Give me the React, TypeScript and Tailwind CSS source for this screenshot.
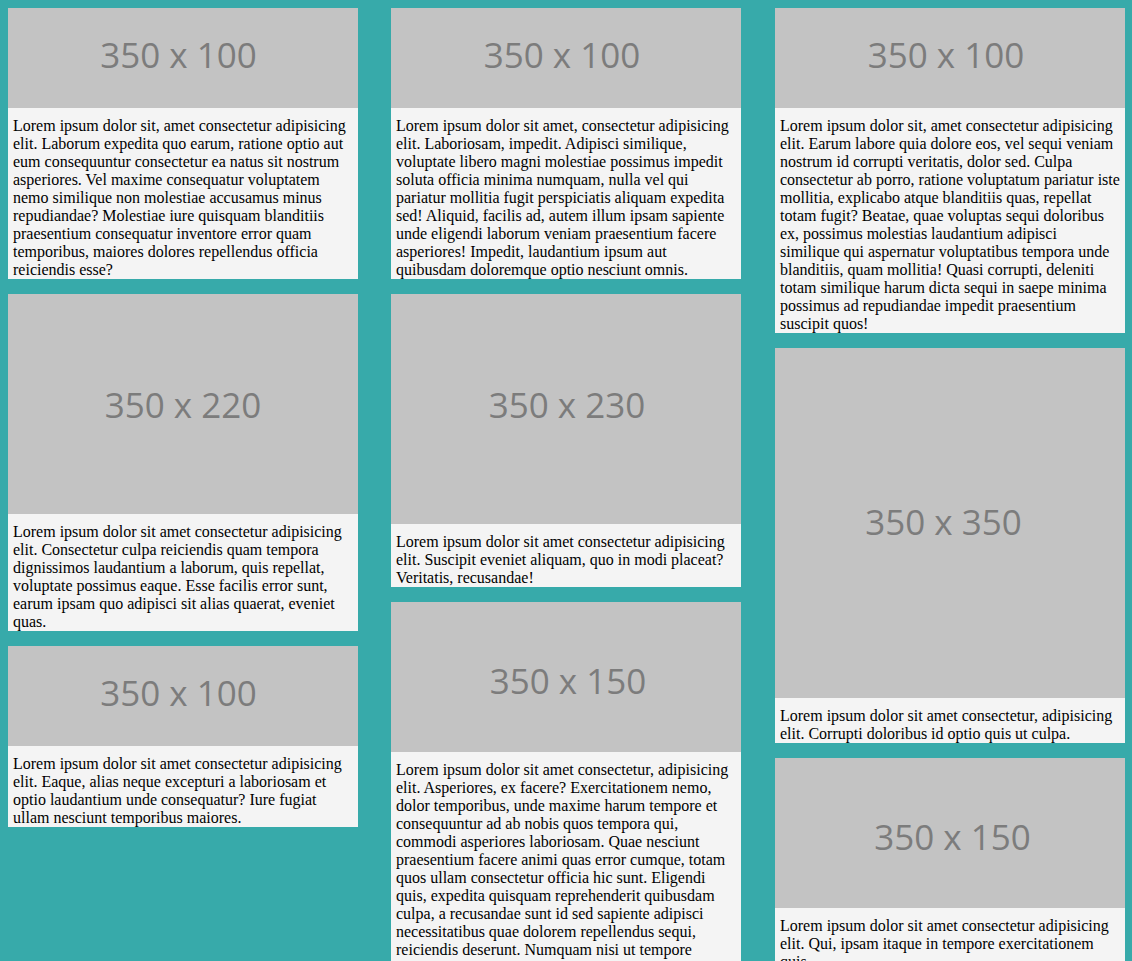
type Card = {
  w: number;
  h: number;
  imgH: string;
  nudge: string;
  text: string;
};

const columns: Card[][] = [
  [
    {
      w: 350,
      h: 100,
      imgH: "h-[100px]",
      nudge: "pr-[9px] pb-[8px]",
      text: "Lorem ipsum dolor sit, amet consectetur adipisicing elit. Laborum expedita quo earum, ratione optio aut eum consequuntur consectetur ea natus sit nostrum asperiores. Vel maxime consequatur voluptatem nemo similique non molestiae accusamus minus repudiandae? Molestiae iure quisquam blanditiis praesentium consequatur inventore error quam temporibus, maiores dolores repellendus officia reiciendis esse?",
    },
    {
      w: 350,
      h: 220,
      imgH: "h-[220px]",
      nudge: "",
      text: "Lorem ipsum dolor sit amet consectetur adipisicing elit. Consectetur culpa reiciendis quam tempora dignissimos laudantium a laborum, quis repellat, voluptate possimus eaque. Esse facilis error sunt, earum ipsam quo adipisci sit alias quaerat, eveniet quas.",
    },
    {
      w: 350,
      h: 100,
      imgH: "h-[100px]",
      nudge: "pr-[9px] pb-[8px]",
      text: "Lorem ipsum dolor sit amet consectetur adipisicing elit. Eaque, alias neque excepturi a laboriosam et optio laudantium unde consequatur? Iure fugiat ullam nesciunt temporibus maiores.",
    },
  ],
  [
    {
      w: 350,
      h: 100,
      imgH: "h-[100px]",
      nudge: "pr-[8px] pb-[8px]",
      text: "Lorem ipsum dolor sit amet, consectetur adipisicing elit. Laboriosam, impedit. Adipisci similique, voluptate libero magni molestiae possimus impedit soluta officia minima numquam, nulla vel qui pariatur mollitia fugit perspiciatis aliquam expedita sed! Aliquid, facilis ad, autem illum ipsam sapiente unde eligendi laborum veniam praesentium facere asperiores! Impedit, laudantium ipsum aut quibusdam doloremque optio nesciunt omnis.",
    },
    {
      w: 350,
      h: 230,
      imgH: "h-[230px]",
      nudge: "pl-[2px] pb-[10px]",
      text: "Lorem ipsum dolor sit amet consectetur adipisicing elit. Suscipit eveniet aliquam, quo in modi placeat? Veritatis, recusandae!",
    },
    {
      w: 350,
      h: 150,
      imgH: "h-[150px]",
      nudge: "pl-[4px] pt-[6px]",
      text: "Lorem ipsum dolor sit amet consectetur, adipisicing elit. Asperiores, ex facere? Exercitationem nemo, dolor temporibus, unde maxime harum tempore et consequuntur ad ab nobis quos tempora qui, commodi asperiores laboriosam. Quae nesciunt praesentium facere animi quas error cumque, totam quos ullam consectetur officia hic sunt. Eligendi quis, expedita quisquam reprehenderit quibusdam culpa, a recusandae sunt id sed sapiente adipisci necessitatibus quae dolorem repellendus sequi, reiciendis deserunt. Numquam nisi ut tempore voluptatibus, ea dolores fugiat.",
    },
  ],
  [
    {
      w: 350,
      h: 100,
      imgH: "h-[100px]",
      nudge: "pr-[8px] pb-[8px]",
      text: "Lorem ipsum dolor sit, amet consectetur adipisicing elit. Earum labore quia dolore eos, vel sequi veniam nostrum id corrupti veritatis, dolor sed. Culpa consectetur ab porro, ratione voluptatum pariatur iste mollitia, explicabo atque blanditiis quas, repellat totam fugit? Beatae, quae voluptas sequi doloribus ex, possimus molestias laudantium adipisci similique qui aspernatur voluptatibus tempora unde blanditiis, quam mollitia! Quasi corrupti, deleniti totam similique harum dicta sequi in saepe minima possimus ad repudiandae impedit praesentium suscipit quos!",
    },
    {
      w: 350,
      h: 350,
      imgH: "h-[350px]",
      nudge: "pr-[13px] pb-[3px]",
      text: "Lorem ipsum dolor sit amet consectetur, adipisicing elit. Corrupti doloribus id optio quis ut culpa.",
    },
    {
      w: 350,
      h: 150,
      imgH: "h-[150px]",
      nudge: "pl-[5px] pt-[6px]",
      text: "Lorem ipsum dolor sit amet consectetur adipisicing elit. Qui, ipsam itaque in tempore exercitationem quis.",
    },
  ],
];

// Grey placeholder block standing in for the image
const Placeholder = ({ card }: { card: Card }) => (
  <div className={`flex w-[350px] items-center justify-center bg-[#c3c3c3] ${card.imgH} ${card.nudge}`}>
    <span className="font-['Open_Sans',sans-serif] text-[35px] leading-none text-[#7c7c7c]">
      {card.w} x {card.h}
    </span>
  </div>
);

export default function App() {
  return (
    <div className="flex min-h-screen items-start bg-[#37aaaa] pl-[8px] pt-[8px]">
      {columns.map((col, ci) => (
        <div
          key={ci}
          className={`flex w-[350px] flex-col gap-[15px] ${ci === 1 ? "ml-[33px]" : ""} ${ci === 2 ? "ml-[34px]" : ""}`}
        >
          {col.map((card, i) => (
            <div key={i} className="bg-[#f4f4f4]">
              <Placeholder card={card} />
              <p className="px-[5px] pt-[9px] font-['Liberation_Serif',serif] text-[16px] leading-[18px] text-black">
                {card.text}
              </p>
            </div>
          ))}
        </div>
      ))}
    </div>
  );
}
